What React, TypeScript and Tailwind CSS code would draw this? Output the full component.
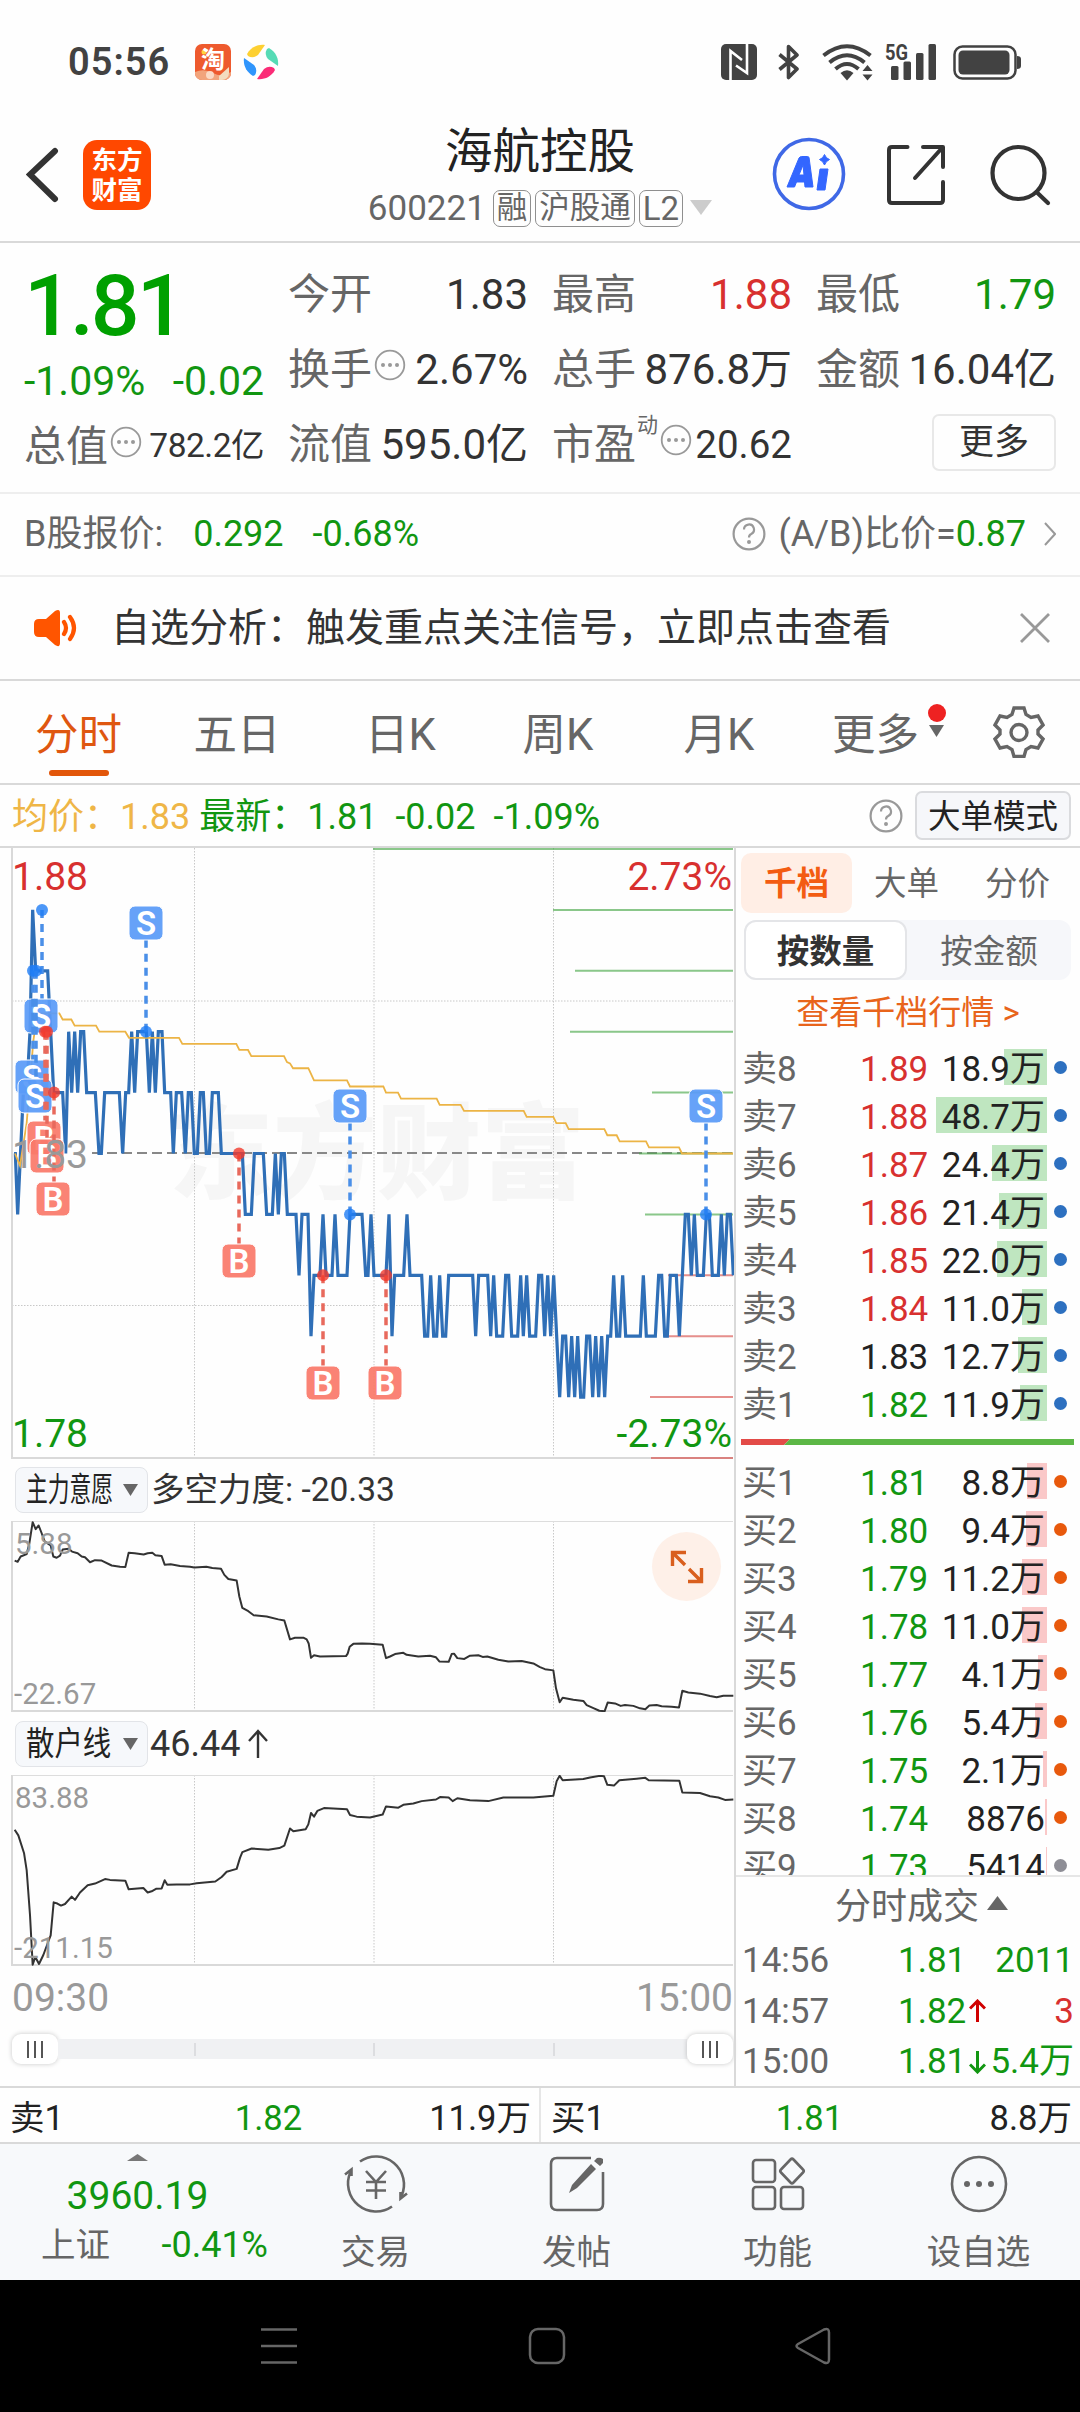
import type { ReactNode } from 'react';

interface DepthRow {
  label: string;
  price: string;
  volume: string;
  bar: number;
  tone: 'up' | 'flat' | 'down';
  dim?: boolean;
}

const SELLS: DepthRow[] = [
  { label: '卖8', price: '1.89', volume: '18.9万', bar: 43, tone: 'up' },
  { label: '卖7', price: '1.88', volume: '48.7万', bar: 111, tone: 'up' },
  { label: '卖6', price: '1.87', volume: '24.4万', bar: 55, tone: 'up' },
  { label: '卖5', price: '1.86', volume: '21.4万', bar: 48, tone: 'up' },
  { label: '卖4', price: '1.85', volume: '22.0万', bar: 50, tone: 'up' },
  { label: '卖3', price: '1.84', volume: '11.0万', bar: 25, tone: 'up' },
  { label: '卖2', price: '1.83', volume: '12.7万', bar: 29, tone: 'flat' },
  { label: '卖1', price: '1.82', volume: '11.9万', bar: 27, tone: 'down' },
];

const BUYS: DepthRow[] = [
  { label: '买1', price: '1.81', volume: '8.8万', bar: 20, tone: 'down' },
  { label: '买2', price: '1.80', volume: '9.4万', bar: 21, tone: 'down' },
  { label: '买3', price: '1.79', volume: '11.2万', bar: 25, tone: 'down' },
  { label: '买4', price: '1.78', volume: '11.0万', bar: 25, tone: 'down' },
  { label: '买5', price: '1.77', volume: '4.1万', bar: 9, tone: 'down' },
  { label: '买6', price: '1.76', volume: '5.4万', bar: 12, tone: 'down' },
  { label: '买7', price: '1.75', volume: '2.1万', bar: 4, tone: 'down' },
  { label: '买8', price: '1.74', volume: '8876', bar: 2, tone: 'down' },
  { label: '买9', price: '1.73', volume: '5414', bar: 1, tone: 'down', dim: true },
];

const TONES = {
  up: 'text-[#d8302f]',
  flat: 'text-[#222]',
  down: 'text-[#119611]',
};

// [x in thirds of a pixel, cents away from 1.83]
const PRICE: [number, number][] = [
  [42, 0], [46, 0], [53, -1], [70, 1], [80, 1], [90, 2], [98, 4], [107, 3], [143, 3], [152, 2], [161, 1], [188, 1], [197, 0],
  [206, 2], [215, 1], [224, 2], [233, 1], [242, 2], [251, 2], [260, 1], [286, 1], [297, 0], [304, 0], [314, 1], [358, 1],
  [368, 0], [377, 1], [386, 1], [395, 2], [404, 1], [413, 2], [439, 2], [448, 1], [457, 2], [466, 1], [475, 2], [486, 2],
  [494, 1], [512, 1], [520, 0], [529, 1], [545, 1], [556, 0], [565, 1], [574, 1], [583, 0], [592, 0], [601, 1], [610, 1],
  [619, 0], [628, 0], [637, 1], [655, 1], [664, 0], [727, 0], [736, -1], [754, -1], [763, 0], [790, 0], [800, -1], [817, -1],
  [826, 0], [835, -1], [844, 0], [853, 0], [862, -1], [888, -1], [897, -2], [906, -1], [924, -1], [933, -3], [942, -2],
  [960, -2], [969, -1], [978, -2], [996, -2], [1005, -1], [1014, -2], [1041, -2], [1050, -1], [1086, -1], [1097, -2],
  [1104, -2], [1113, -1], [1122, -2], [1158, -2], [1167, -1], [1176, -3], [1184, -2], [1211, -2], [1221, -1], [1230, -2],
  [1265, -2], [1274, -3], [1283, -3], [1292, -2], [1301, -3], [1310, -3], [1319, -2], [1328, -3], [1337, -3], [1346, -2],
  [1418, -2], [1427, -3], [1436, -2], [1463, -2], [1472, -3], [1481, -2], [1490, -3], [1508, -3], [1517, -2], [1526, -2],
  [1535, -3], [1553, -3], [1562, -2], [1570, -3], [1580, -2], [1589, -3], [1607, -3], [1616, -2], [1625, -2], [1634, -3],
  [1643, -2], [1652, -3], [1661, -2], [1670, -3], [1679, -4], [1688, -3], [1697, -3], [1706, -4], [1715, -3], [1724, -4],
  [1733, -3], [1742, -4], [1751, -4], [1760, -3], [1769, -3], [1778, -4], [1787, -3], [1796, -4], [1805, -3], [1814, -4],
  [1823, -3], [1832, -3], [1841, -2], [1850, -3], [1859, -3], [1868, -2], [1877, -3], [1921, -3], [1930, -2], [1939, -3],
  [1966, -3], [1976, -2], [1985, -2], [1994, -3], [2002, -3], [2011, -2], [2029, -2], [2038, -3], [2047, -2], [2056, -1],
  [2065, -1], [2074, -2], [2083, -1], [2092, -2], [2110, -2], [2119, -1], [2128, -1], [2137, -2], [2155, -2], [2164, -1],
  [2173, -2], [2182, -1], [2191, -1], [2200, -2],
];

const AVERAGE: [number, number][] = [
  [45, 0], [60, -0.2], [80, 0.5], [100, 1.85], [112, 2.3], [178, 2.3], [188, 2.2], [214, 2.2], [224, 2.1], [288, 2.1],
  [298, 2], [376, 2], [387, 1.9], [537, 1.9], [547, 1.8], [709, 1.8], [718, 1.7], [744, 1.7], [754, 1.6], [852, 1.6],
  [861, 1.5], [870, 1.48], [879, 1.4], [925, 1.4], [942, 1.2], [1041, 1.2], [1050, 1.1], [1150, 1.1], [1158, 1],
  [1194, 1], [1203, 0.9], [1310, 0.9], [1319, 0.8], [1382, 0.8], [1392, 0.7], [1571, 0.7], [1580, 0.6], [1660, 0.6],
  [1669, 0.5], [1697, 0.5], [1706, 0.4], [1813, 0.4], [1822, 0.3], [1850, 0.3], [1859, 0.2], [1938, 0.2], [1947, 0.1],
  [2037, 0.1], [2046, 0], [2199, 0],
];

// resting orders drawn at the right edge: [cents, left x]
const LADDER: [number, number][] = [
  [5, 373], [4, 553], [3, 575], [2, 570], [1, 652], [0, 639], [-1, 645], [-2, 668], [-3, 664], [-4, 650], [-5, 651],
];

const MARKERS: { kind: 'S' | 'B'; x: number; cents: number; box: number; boxX?: number }[] = [
  { kind: 'S', x: 42, cents: 4, box: 168, boxX: 41 },
  { kind: 'S', x: 33, cents: 3, box: 229, boxX: 32 },
  { kind: 'S', x: 36, cents: 3, box: 248, boxX: 35 },
  { kind: 'B', x: 45, cents: 2, box: 290, boxX: 44 },
  { kind: 'B', x: 47, cents: 2, box: 308, boxX: 47 },
  { kind: 'B', x: 54, cents: 1, box: 351, boxX: 53 },
  { kind: 'S', x: 146, cents: 2, box: 75 },
  { kind: 'B', x: 239, cents: 0, box: 413 },
  { kind: 'B', x: 323, cents: -2, box: 535 },
  { kind: 'S', x: 350, cents: -1, box: 258 },
  { kind: 'B', x: 386, cents: -2, box: 535, boxX: 385 },
  { kind: 'S', x: 706, cents: -1, box: 258 },
];

const MAIN_FORCE =
  '44,272 53,275 62,262 80,256 88,230 98,178 107,195 116,186 125,205 134,225 152,235 160,262 170,265 180,260 188,245 206,243 216,250 233,254 245,262 255,264 270,276 285,271 305,272 335,284 360,287 376,288 386,253 404,254 431,257 443,254 457,253 466,259 485,261 494,282 512,281 540,285 570,287 583,289 619,287 637,290 663,292 673,307 685,317 710,321 718,360 727,388 745,396 761,406 800,409 835,416 853,419 870,465 885,461 910,461 920,465 926,475 933,510 942,504 960,507 1038,506 1043,500 1049,483 1060,476 1086,475 1110,476 1148,478 1158,511 1170,507 1185,501 1210,498 1220,503 1255,507 1290,505 1308,509 1318,519 1346,520 1355,501 1362,500 1372,511 1393,513 1410,505 1435,504 1448,508 1462,507 1495,515 1525,519 1565,518 1600,524 1620,533 1635,538 1660,541 1668,585 1679,619 1688,608 1720,613 1750,616 1760,626 1782,634 1798,640 1814,641 1823,620 1845,622 1862,628 1875,626 1900,628 1920,634 1936,636 1948,627 1970,626 1985,629 2015,630 2037,632 2047,591 2065,595 2100,598 2130,604 2150,607 2170,603 2200,603';

const RETAIL =
  '44,931 55,945 72,988 80,1030 90,1140 98,1262 106,1243 117,1260 130,1238 145,1205 152,1190 161,1109 172,1112 183,1117 195,1113 215,1095 225,1103 240,1085 263,1067 285,1063 315,1052 330,1054 376,1056 386,1077 430,1074 443,1085 455,1082 468,1076 485,1075 494,1055 502,1066 530,1065 570,1065 590,1062 646,1058 665,1047 680,1034 710,1027 720,1000 727,986 755,977 805,980 838,976 853,970 870,928 880,935 917,930 925,918 933,890 942,899 952,885 972,878 1041,881 1050,895 1070,899 1110,901 1148,894 1158,874 1195,877 1210,870 1240,867 1265,861 1308,857 1320,851 1346,852 1358,861 1372,854 1410,859 1465,861 1510,852 1600,852 1660,848 1670,812 1679,799 1688,810 1750,807 1770,803 1800,799 1812,800 1822,821 1842,823 1858,810 1910,806 1936,804 1946,810 2038,811 2047,840 2100,841 2130,849 2155,852 2175,858 2200,857';

const priceY = (cents: number) => 305.5 - cents * 60.9;
const toPoints = (data: [number, number][]) => data.map(([x, c]) => `${x / 3},${priceY(c)}`).join(' ');

function StatusBar() {
  return (
    <div className="flex h-[104px] items-center pt-[21px] pr-[59px] pl-[68px] text-[#424242]">
      <span className="w-[127px] text-[38px] leading-none font-semibold tracking-[1px]">05:56</span>
      <svg width="36" height="36" viewBox="0 0 36 36">
        <rect width="36" height="36" rx="7" fill="#ee5a2e" />
        <path d="M0 28q9-4 18 1t18-1v1a7 7 0 0 1-7 7H7a7 7 0 0 1-7-7z" fill="#f2a47c" />
        <circle cx="15" cy="31" r="4" fill="#fbd9c4" />
        <path d="M24 32l10-9v6a7 7 0 0 1-7 7h-3z" fill="#f3dcc0" />
        <circle cx="9" cy="8" r="2.5" fill="#ffd23e" />
        <text x="18" y="24" fontSize="24" fontWeight="700" fill="#fff" textAnchor="middle">淘</text>
      </svg>
      <svg width="36" height="36" viewBox="-18 -18 36 36" className="ml-[12px]">
        <path d="M-14-8C-10-15-3-18 4-17L-3-7q-5 4-10 1z" fill="#fdd032" />
        <path d="M8-14C15-10 18-3 17 4L7-3q-4-5-1-10z" fill="#56dbb5" />
        <path d="M14 8C10 15 3 18-4 17L3 7q5-4 10-1z" fill="#fb2c77" />
        <path d="M-8 14C-15 10-18 3-17-4L-7 3q4 5 1 10z" fill="#2f95fc" />
      </svg>
      <div className="flex-1" />
      <svg width="36" height="36" viewBox="0 0 36 36">
        <rect width="36" height="36" rx="5" fill="#424242" />
        <path d="M9.500 36V7l11.500 9M26 0v29L15 21.500" fill="none" stroke="#fff" strokeWidth="2.600" />
      </svg>
      <svg width="22" height="36" viewBox="0 0 22 36" className="ml-[21px]" fill="none" stroke="#424242" strokeWidth="3.600" strokeLinejoin="round">
        <path d="M1.500 10.500L19 25l-8.500 8.500V2.500L19 11 1.500 25.500" />
      </svg>
      <svg width="51" height="37" viewBox="0 0 51 37" className="ml-[22px]">
        <g fill="none" stroke="#424242" strokeWidth="4">
          <path d="M1.500 11.500Q25 -7 48.500 11.500" />
          <path d="M7.500 18.500Q25 4 42.500 18.500" />
          <path d="M13.500 25Q25 15 36.500 25" />
        </g>
        <path d="M18.500 29q6.500-5.500 13 0L25 36.500z" fill="#424242" />
        <path d="M40.500 27l5-6 5 6zM40.500 30.500l5 6 5-6z" fill="#424242" />
      </svg>
      <svg width="54" height="38" viewBox="0 0 54 38" className="ml-[12px] overflow-visible" fill="#424242">
        <text x="0" y="16.500" fontSize="22" fontWeight="700" textLength="23" lengthAdjust="spacingAndGlyphs">5G</text>
        <rect x="6" y="23" width="7.500" height="14" rx="1.500" />
        <rect x="18.500" y="18.500" width="7.500" height="18.500" rx="1.500" />
        <rect x="31" y="10" width="7.500" height="27" rx="1.500" />
        <rect x="43.500" y="1" width="7.500" height="36" rx="1.500" />
      </svg>
      <svg width="68" height="36" viewBox="0 0 68 36" className="ml-[14px]">
        <rect x="1.500" y="2.500" width="61" height="32" rx="8" fill="none" stroke="#424242" strokeWidth="2.500" />
        <rect x="5.500" y="6.500" width="51" height="24" rx="4.500" fill="#424242" />
        <path d="M64 12q4 0 4 3v7q0 3-4 3z" fill="#424242" />
      </svg>
    </div>
  );
}

function Tag({ children }: { children: ReactNode }) {
  return (
    <span className="flex h-[37px] items-center rounded-[7px] border border-[#8f8f8f] px-[3px] leading-none">
      {children}
    </span>
  );
}

function Header() {
  return (
    <header className="flex h-[139px] border-b-2 border-[#d9d9d9]">
      <div className="flex w-[340px] items-start pt-[36px] pl-[26px]">
        <svg width="36" height="66" viewBox="0 0 36 66" fill="none" stroke="#333" strokeWidth="6" strokeLinecap="round">
          <path d="M29 11L4 34.500 29 59" />
        </svg>
        <div className="ml-[21px] flex h-[70px] w-[68px] flex-col items-center justify-center rounded-[14px] bg-[#ff4800] text-[25.500px] leading-[30px] font-bold text-white">
          <span>东方</span>
          <span>财富</span>
        </div>
      </div>
      <div className="flex w-[400px] flex-col items-center pt-[22px]">
        <h1 className="text-[47.500px] leading-[52px] text-[#222]">海航控股</h1>
        <div className="mt-[12px] flex items-center gap-[4px] text-[30.500px] text-[#666]">
          <span className="mr-[3px] text-[35px] leading-none">600221</span>
          <Tag>融</Tag>
          <Tag>沪股通</Tag>
          <Tag>
            <span className="text-[33px]">L2</span>
          </Tag>
          <svg width="22" height="16" viewBox="0 0 22 16" className="ml-[3px]" fill="#ccc">
            <path d="M0 0h22L11 15z" />
          </svg>
        </div>
      </div>
      <div className="flex flex-1 items-start pt-[33px] pl-[32px]">
        <svg width="74" height="74" viewBox="-37 -37 74 74">
          <circle r="34.500" fill="none" stroke="#3f68e6" strokeWidth="3.600" />
          <path
            d="M-22 13L-10-16q1-1.500 2.500-1.500h6q1.500 0 1.600 1.500L4 13h-8l-.5-5h-8l-2 5zM-10 1h5l-1-10zM11-5h8L16 16H8z"
            fill="#3366ff"
            fillRule="evenodd"
            strokeLinejoin="round"
            stroke="#3366ff"
          />
          <path d="M15.500-19.500q1.500 4 5 5-3.500 1.500-5 5.500-1.500-4-5-5.500 3.500-1 5-5z" fill="#3366ff" stroke="#3366ff" />
        </svg>
        <svg width="60" height="62" viewBox="0 0 60 62" className="mt-[7px] ml-[41px]" fill="none" stroke="#333" strokeWidth="4" strokeLinecap="round" strokeLinejoin="round">
          <path d="M20.500 3H5q-3 0-3 3v50q0 3 3 3h48q3 0 3-3V38M36 3h20v20M55 4L28 34" />
        </svg>
        <svg width="64" height="64" viewBox="0 0 64 64" className="mt-[7px] ml-[42px]" fill="none" stroke="#333" strokeWidth="4.200" strokeLinecap="round">
          <circle cx="29.500" cy="29" r="26" />
          <path d="M47.500 48L59 59" />
        </svg>
      </div>
    </header>
  );
}

function Dots() {
  return (
    <svg width="32" height="32" viewBox="-16 -16 32 32" fill="#999" className="mb-[10px] ml-[2px] shrink-0">
      <circle r="14.300" fill="none" stroke="#999" strokeWidth="1.800" />
      <circle cx="-7" r="2" />
      <circle r="2" />
      <circle cx="7" r="2" />
    </svg>
  );
}

function Help() {
  return (
    <svg width="34" height="34" viewBox="-17 -17 34 34" fill="none" stroke="#999" strokeWidth="2.200">
      <circle r="15.400" />
      <path d="M-5-4.500a5 5 0 1 1 7.200 4.500Q0 1 0 3.500" />
      <circle cy="8" r=".9" fill="#999" />
    </svg>
  );
}

function Stat({ label, value, className = 'text-[#333]', dots = false }: { label: string; value: string; className?: string; dots?: boolean }) {
  return (
    <div className="flex h-[75px] items-center">
      <span className="text-[#666]">{label}</span>
      {dots && <Dots />}
      <span className={`ml-auto ${className}`}>{value}</span>
    </div>
  );
}

function Quote() {
  return (
    <section className="grid h-[251px] grid-cols-4 gap-x-6 border-b-2 border-[#eee] px-6 pt-[15px] text-[42px] leading-none whitespace-nowrap">
      <div>
        <div className="flex h-[88px] items-center pt-[8px] text-[86px] font-medium tracking-[-3px] text-[#00a000]">1.81</div>
        <div className="flex h-[66px] items-center justify-between pt-[5px] text-[41px] text-[#119611]">
          <span>-1.09%</span>
          <span>-0.02</span>
        </div>
        <div className="flex h-[71px] items-center">
          <span className="text-[#666]">总值</span>
          <Dots />
          <span className="ml-auto pb-[4px] text-[33.500px] tracking-[-0.500px] text-[#333]">782.2亿</span>
        </div>
      </div>
      <div>
        <Stat label="今开" value="1.83" />
        <Stat label="换手" value="2.67%" dots />
        <Stat label="流值" value="595.0亿" />
      </div>
      <div>
        <Stat label="最高" value="1.88" className={TONES.up} />
        <Stat label="总手" value="876.8万" />
        <div className="flex h-[75px] items-center text-[#666]">
          <span>市盈</span>
          <span className="mb-[40px] ml-[1px] text-[21px]">动</span>
          <Dots />
          <span className="ml-auto text-[38.500px] text-[#333]">20.62</span>
        </div>
      </div>
      <div>
        <Stat label="最低" value="1.79" className={TONES.down} />
        <Stat label="金额" value="16.04亿" />
        <div className="flex h-[75px] items-center justify-end">
          <button className="mt-[-6px] h-[57px] w-[124px] rounded-[7px] border-2 border-[#e8e8e8] text-[35px] leading-none text-[#333]">更多</button>
        </div>
      </div>
    </section>
  );
}

function BShareRow() {
  return (
    <div className="flex h-[83px] items-center border-b-2 border-[#eee] px-6 pb-[1px] text-[36px] leading-none text-[#666]">
      <span>B股报价:</span>
      <span className="ml-[30px] text-[#119611]">0.292</span>
      <span className="ml-[29px] text-[#119611]">-0.68%</span>
      <span className="flex-1" />
      <Help />
      <span className="ml-[12px]">(A/B)比价=</span>
      <span className="text-[#119611]">0.87</span>
      <svg width="12" height="26" viewBox="0 0 12 26" className="ml-[18px]" fill="none" stroke="#999" strokeWidth="2">
        <path d="M1 2l10 11L1 24" />
      </svg>
    </div>
  );
}

function Notice() {
  return (
    <div className="flex h-[105px] items-center border-b-2 border-[#d9d9d9] pl-[33px] text-[#333]">
      <svg width="46" height="38" viewBox="0 0 46 38" fill="#ff5500">
        <path d="M6 10h7L22 2q5-3 5 2v30q0 5-5 2l-9-8H6q-5 0-5-5v-8q0-5 5-5z" />
        <path d="M31 13q4 6 0 12M37 8q8 11 0 22" fill="none" stroke="#ff5500" strokeWidth="4.200" strokeLinecap="round" />
      </svg>
      <span className="ml-[32px] pt-[2px] text-[39px] leading-none whitespace-nowrap">自选分析：触发重点关注信号，立即点击查看</span>
      <svg width="30" height="30" viewBox="0 0 30 30" className="ml-[129px]" stroke="#999" strokeWidth="2.800">
        <path d="M1 1l28 28M29 1L1 29" />
      </svg>
    </div>
  );
}

function PeriodTabs() {
  return (
    <nav className="flex h-[104px] items-center border-b-2 border-[#d9d9d9] text-[43.500px] leading-none text-[#666]">
      <span className="relative flex h-full w-[157px] items-center justify-center pt-[6px] text-[#df5710]">
        分时
        <span className="absolute bottom-[7px] left-[49px] h-[6px] w-[60px] rounded-full bg-[#e2560a]" />
      </span>
      <span className="w-[160px] pt-[6px] text-center">五日</span>
      <span className="w-[167px] pt-[6px] text-center">日K</span>
      <span className="w-[148px] pt-[6px] text-center">周K</span>
      <span className="w-[174px] pt-[6px] text-center">月K</span>
      <span className="relative ml-[26px] pt-[6px]">
        更多
        <span className="absolute top-[-4px] left-[96px] h-[18px] w-[18px] rounded-full bg-[#ee2222]" />
        <svg width="15" height="12" viewBox="0 0 15 12" className="absolute top-[17px] left-[97px]" fill="#666">
          <path d="M0 0h15L7.500 12z" />
        </svg>
      </span>
      <svg width="52" height="52" viewBox="-26 -26 52 52" className="ml-[74px]" fill="none" stroke="#666" strokeWidth="3.400">
        <path d="M-5-24h10l2 6.500 5 3 7-1.500 5 9-5 5v4l5 5-5 9-7-1.500-5 3-2 7h-10l-2-7-5-3-7 1.500-5-9 5-5v-4l-5-5 5-9 7 1.500 5-3z" />
        <circle r="8" cy=".5" />
      </svg>
    </nav>
  );
}

function PriceSummary() {
  return (
    <div className="flex h-[63px] items-center border-b-2 border-[#d9d9d9] pr-[9px] pl-3 text-[36px] leading-none whitespace-nowrap text-[#119611]">
      <span className="pt-[2px] text-[#efb647]">均价：1.83</span>
      <span className="ml-[9px] pt-[2px]">最新：1.81</span>
      <span className="ml-[18px] pt-[2px]">-0.02</span>
      <span className="ml-[18px] pt-[2px]">-1.09%</span>
      <span className="flex-1" />
      <Help />
      <button className="ml-[12px] h-[49px] w-[156px] rounded-[7px] border-2 border-[#dadbde] bg-[#f6f7fa] pt-[2px] text-[32.500px] leading-none text-[#222]">
        大单模式
      </button>
    </div>
  );
}

function GridLines({ height }: { height: number }) {
  return (
    <g stroke="#c8c8c8" strokeWidth="1" strokeDasharray="1.500 1.500">
      <path d={`M194.500 0V${height}M374 0V${height}M553.500 0V${height}`} />
    </g>
  );
}

function PriceChart() {
  return (
    <svg width="734" height="611" viewBox="0 0 734 611" className="mb-[-1px] block">
      <text x="169" y="343" fontSize="104" fontWeight="900" fill="#f6f6f6">东方财富</text>
      <GridLines height={610} />
      <path d="M12 153H733M12 457.500H733" stroke="#c8c8c8" strokeDasharray="1.500 1.500" />
      <path d="M12 0V610H733" fill="none" stroke="#d9d9d9" strokeWidth="2" />
      <path d="M92 305H733" stroke="#888" strokeWidth="2" strokeDasharray="10 5" />
      {LADDER.map(([cents, x]) => (
        <path
          key={cents}
          d={`M${x} ${Math.max(priceY(cents), 1)}H733`}
          stroke={cents > -2 ? '#4ba94b' : '#d9534f'}
          strokeOpacity=".65"
          strokeWidth="2"
        />
      ))}
      <polyline points={toPoints(PRICE)} fill="none" stroke="#2f6fb7" strokeWidth="3.200" />
      <polyline points={toPoints(AVERAGE)} fill="none" stroke="#ecb445" strokeWidth="1.800" />
      {MARKERS.map((m, i) => {
        const color = m.kind === 'S' ? '#5a9bf8' : '#fa7a6a';
        const bx = m.boxX ?? m.x;
        const y = priceY(m.cents);
        const edge = m.box > y ? m.box - 17 : m.box + 17;
        return (
          <g key={i}>
            <path d={`M${m.x} ${y}V${edge}`} stroke={m.kind === 'S' ? '#4a8fe8' : '#e8695c'} strokeWidth="3.500" strokeDasharray="8 6" />
            <circle cx={m.x} cy={y} r="6" fill={m.kind === 'S' ? '#1f7df5' : '#f2392c'} fillOpacity=".8" />
            <rect x={bx - 17} y={m.box - 17} width="34" height="34" rx="6" fill={color} fillOpacity=".93" stroke="#fff" />
            <text x={bx} y={m.box + 11.500} fontSize="33" fontWeight="600" fill="#fff" textAnchor="middle">{m.kind}</text>
          </g>
        );
      })}
      <g fontSize="39">
        <text x="12" y="42" fill="#d8302f">1.88</text>
        <text x="12" y="319.500" fill="#999">1.83</text>
        <text x="12" y="599" fill="#119611">1.78</text>
        <text x="732" y="42" fill="#d8302f" textAnchor="end">2.73%</text>
        <text x="732" y="599" fill="#119611" textAnchor="end">-2.73%</text>
      </g>
    </svg>
  );
}

function TrendChart({ points, top, high, low, children }: { points: string; top: number; high: string; low: string; children?: ReactNode }) {
  return (
    <div className="relative h-[191px]">
      <svg width="734" height="191" viewBox="0 0 734 191" className="block">
        <GridLines height={190} />
        <path d="M12 .5H733" stroke="#ddd" />
        <path d="M12 0V190H733" fill="none" stroke="#d9d9d9" strokeWidth="2" />
        <svg width="735" height="191" viewBox={`0 ${top} 2205 468`} preserveAspectRatio="none">
          <polyline points={points} fill="none" stroke="#333" strokeWidth="2" strokeLinejoin="round" vectorEffect="non-scaling-stroke" />
        </svg>
        <g fontSize="29.500" fill="#999">
          <text x="15" y="33">{high}</text>
          <text x="14" y="182.500">{low}</text>
        </g>
      </svg>
      {children}
    </div>
  );
}

function IndicatorBar({ name, nameClass, children }: { name: string; nameClass: string; children: ReactNode }) {
  return (
    <div className="flex h-[63px] items-center pl-[15px] text-[#333]">
      <button className="flex h-[46px] w-[133px] items-center rounded-[8px] border border-[#e2e4e8] bg-[#f6f8fb] pl-[10px] text-left leading-none whitespace-nowrap text-[#222]">
        <span className="w-[97px]">
          <span className={nameClass}>{name}</span>
        </span>
        <svg width="15" height="12" viewBox="0 0 15 12" fill="#666">
          <path d="M0 0h15L7.500 12z" />
        </svg>
      </button>
      {children}
    </div>
  );
}

function RangeHandle() {
  return (
    <span className="flex h-[30px] w-[46px] items-center justify-center gap-[5px] rounded-[9px] bg-white shadow-[0_0_5px_rgba(0,0,0,0.22)]">
      <i className="h-[17px] w-[2px] bg-[#555]" />
      <i className="h-[17px] w-[2px] bg-[#555]" />
      <i className="h-[17px] w-[2px] bg-[#555]" />
    </span>
  );
}

function RangeSlider() {
  return (
    <div className="mt-[16px] ml-3 flex h-[30px] w-[721px] items-center justify-between">
      <RangeHandle />
      <div className="flex h-[20px] flex-1 items-center bg-[#f0f1f3]">
        <i className="ml-[136px] h-[13px] w-[2px] bg-[#dcdde0]" />
        <i className="ml-[177px] h-[13px] w-[2px] bg-[#dcdde0]" />
        <i className="ml-[178px] h-[13px] w-[2px] bg-[#dcdde0]" />
      </div>
      <RangeHandle />
    </div>
  );
}

function Charts() {
  return (
    <div className="w-[734px] shrink-0">
      <PriceChart />
      <IndicatorBar name="主力意愿" nameClass="inline-block origin-left scale-x-[0.66] text-[33px]">
        <span className="ml-[3px] text-[33.500px] leading-none">多空力度: -20.33</span>
      </IndicatorBar>
      <TrendChart points={MAIN_FORCE} top={175} high="5.88" low="-22.67">
        <span className="absolute top-[11px] left-[652px] flex h-[69px] w-[69px] items-center justify-center rounded-full bg-[#fef0e8]">
          <svg width="34" height="34" viewBox="0 0 34 34" fill="none" stroke="#d95f1e" strokeWidth="3.400">
            <path d="M2.500 16V2.500H16M3 3l12 12M31.500 18v13.500H18M31 31L19 19" />
          </svg>
        </span>
      </TrendChart>
      <IndicatorBar name="散户线" nameClass="inline-block origin-left scale-x-[0.86] text-[33px]">
        <span className="ml-[2px] text-[36px] leading-none">46.44</span>
        <svg width="20" height="30" viewBox="0 0 20 30" className="ml-[8px]" fill="none" stroke="#333" strokeWidth="2.400">
          <path d="M10 29V2M1 12l9-10 9 10" />
        </svg>
      </IndicatorBar>
      <TrendChart points={RETAIL} top={797} high="83.88" low="-211.15" />
      <div className="flex h-[52px] items-end justify-between pr-[1px] pl-3 text-[39px] leading-none text-[#999]">
        <span>09:30</span>
        <span>15:00</span>
      </div>
      <RangeSlider />
    </div>
  );
}

function DepthLine({ row, side }: { row: DepthRow; side: 'sell' | 'buy' }) {
  const dot = row.dim ? 'bg-[#8e8e96]' : side === 'sell' ? 'bg-[#2d70c0]' : 'bg-[#e8590c]';
  return (
    <div className="relative flex h-[48px] shrink-0 items-center pl-[6px] text-[35px] leading-none">
      <span
        className={`absolute top-[6px] right-[33px] h-[36px] ${side === 'sell' ? 'bg-[#bfe6c0]' : 'bg-[#fac8c8]'}`}
        style={{ width: row.bar }}
      />
      <span className="relative w-[118px] pt-[5px] text-[#666]">{row.label}</span>
      <span className={`relative pt-[5px] ${TONES[row.tone]}`}>{row.price}</span>
      <span className="relative ml-auto pt-[5px] text-[#222]">{row.volume}</span>
      <span className={`mr-[13px] ml-[9px] h-[13px] w-[13px] rounded-full ${dot}`} />
    </div>
  );
}

function TradeLine({ time, price, volume, arrow, up }: { time: string; price: string; volume: string; arrow?: 'up' | 'down'; up?: boolean }) {
  return (
    <div className="flex h-[50.500px] shrink-0 items-center pr-[6px] pl-[6px] text-[35px] leading-none text-[#119611]">
      <span className="w-[156px] text-[#666]">{time}</span>
      <span>{price}</span>
      {arrow && (
        <svg width="17" height="24" viewBox="0 0 17 24" className={`ml-[3px] ${arrow === 'down' ? 'rotate-180' : ''}`} fill="none" stroke={arrow === 'up' ? '#d00000' : '#119611'} strokeWidth="3">
          <path d="M8.500 23V2M1 9.500L8.500 2 16 9.500" />
        </svg>
      )}
      <span className={`ml-auto ${up ? 'text-[#d8302f]' : ''}`}>{volume}</span>
    </div>
  );
}

function OrderBook() {
  return (
    <aside className="flex w-[346px] flex-col border-l-2 border-[#d9d9d9]">
      <div className="mt-[5px] flex h-[60px] shrink-0 items-center pl-[5px] text-[32.500px] leading-none text-[#666]">
        <span className="flex h-full w-[111px] items-center justify-center rounded-[10px] bg-[#ffeee5] pt-[2px] font-bold text-[#f35c12]">千档</span>
        <span className="ml-[22px] pt-[2px]">大单</span>
        <span className="ml-[46px] pt-[2px]">分价</span>
      </div>
      <div className="mt-[7px] mr-[9px] ml-[8px] flex h-[60px] shrink-0 rounded-[12px] bg-[#f6f7fa] text-[32.500px] leading-none text-[#666]">
        <span className="flex w-[163px] items-center justify-center rounded-[12px] border-2 border-[#e4e5e8] bg-white pt-[3px] font-bold text-[#333]">按数量</span>
        <span className="flex flex-1 items-center justify-center pt-[3px]">按金额</span>
      </div>
      <div className="flex h-[63px] shrink-0 items-center justify-center pt-[1px] text-[33px] leading-none text-[#e8641b]">查看千档行情 &gt;</div>
      {SELLS.map((row) => (
        <DepthLine key={row.label} row={row} side="sell" />
      ))}
      <svg width="333" height="6" viewBox="0 0 333 6" className="mt-[12px] mb-[12px] ml-[5px] shrink-0">
        <path d="M0 0H49L43 6H0z" fill="#e34b48" />
        <path d="M49 0H333V6H43z" fill="#5cb746" />
      </svg>
      <div className="h-[420px] shrink-0 overflow-hidden border-b-2 border-[#e6e6e6]">
        {BUYS.map((row) => (
          <DepthLine key={row.label} row={row} side="buy" />
        ))}
      </div>
      <div className="flex h-[58px] shrink-0 items-center justify-center pt-[1px] pl-[27px] text-[36px] leading-none text-[#666]">
        分时成交
        <svg width="21" height="14" viewBox="0 0 21 14" className="mb-[8px] ml-[8px]" fill="#666">
          <path d="M0 14h21L10.500 0z" />
        </svg>
      </div>
      <TradeLine time="14:56" price="1.81" volume="2011" />
      <TradeLine time="14:57" price="1.82" volume="3" arrow="up" up />
      <TradeLine time="15:00" price="1.81" volume="5.4万" arrow="down" />
    </aside>
  );
}

function BestQuote({ label, price, volume }: { label: string; price: string; volume: string }) {
  return (
    <div className="flex flex-1 items-center justify-between pt-[6px] pr-[8px] pl-[10px]">
      <span className="w-[106px]">{label}</span>
      <span className="text-[#119611]">{price}</span>
      <span className="w-[110px] text-right">{volume}</span>
    </div>
  );
}

function NavItem({ label, children }: { label: string; children: ReactNode }) {
  return (
    <div className="flex w-[201px] flex-col items-center pt-[8px] text-[#666]">
      <svg width="64" height="64" viewBox="-32 -32 64 64" fill="none" stroke="#666" strokeWidth="2.600">
        {children}
      </svg>
      <span className="mt-[19px] text-[34.500px] leading-none">{label}</span>
    </div>
  );
}

function BottomNav() {
  return (
    <nav className="flex h-[136px] bg-[#f7f9fb]">
      <div className="flex w-[275px] flex-col items-center leading-none">
        <svg width="21" height="7" viewBox="0 0 21 7" className="mt-[10px]" fill="#777">
          <path d="M0 7h21L10.500 0z" />
        </svg>
        <span className="mt-[16px] text-[39px] text-[#119611]">3960.19</span>
        <div className="mt-[11px] flex w-full items-center justify-between pr-[7px] pl-[41px] text-[34.500px] text-[#666]">
          上证
          <span className="text-[36px] text-[#119611]">-0.41%</span>
        </div>
      </div>
      <NavItem label="交易">
        <path d="M-16-22.500A28 28 0 0 1 25.500 12M16 22.500A28 28 0 0 1-25.500-12M31 9.500L24.500 14.500V8M-31-9.500L-24.500-14.500V-8" />
        <path d="M-10-13L0-2 10-13M-10-2H10M-10 6.500H10M0-2V15" />
      </NavItem>
      <NavItem label="发帖">
        <path d="M14-26H-20q-6 0-6 6V20q0 6 6 6H20q6 0 6-6V-12" />
        <path d="M-8 9l3-8L14-20l5 5L0 4zM17-23l3-3q3-1 6 1v4l-3 3z" fill="#666" stroke="none" />
      </NavItem>
      <NavItem label="功能">
        <rect x="-25" y="-24" width="22" height="22" rx="3" />
        <rect x="-25" y="3" width="22" height="22" rx="3" />
        <rect x="3" y="3" width="22" height="22" rx="3" />
        <path d="M12.500-24.500q1.500-1.500 3 0L25-14.500q1.500 1.500 0 3L15.500-1.500q-1.500 1.500-3 0L3-11.500q-1.500-1.500 0-3z" />
      </NavItem>
      <NavItem label="设自选">
        <circle r="27" />
        <g fill="#666" stroke="none">
          <circle cx="-12" r="3" />
          <circle r="3" />
          <circle cx="12" r="3" />
        </g>
      </NavItem>
    </nav>
  );
}

function SystemNav() {
  return (
    <div className="flex h-[132px] items-center bg-black pl-[260px]">
      <svg width="38" height="38" viewBox="0 0 38 38" stroke="#666" strokeWidth="2.500">
        <path d="M1 2.500h36M1 19h36M1 35.500h36" />
      </svg>
      <svg width="38" height="38" viewBox="0 0 38 38" className="ml-[230px]" fill="none" stroke="#666" strokeWidth="2.500">
        <rect x="2" y="2" width="34" height="34" rx="8" />
      </svg>
      <svg width="36" height="38" viewBox="0 0 36 38" className="ml-[229px]" fill="none" stroke="#666" strokeWidth="2.500" strokeLinejoin="round">
        <path d="M3 17L29 2.500q5-2 5 3V32.500q0 5-5 3L3 21q-3-2 0-4z" />
      </svg>
    </div>
  );
}

export default function App() {
  return (
    <div className="flex h-[2412px] w-[1080px] flex-col overflow-hidden bg-[#fefefe] font-['Roboto','Noto_Sans_CJK_SC',sans-serif]">
      <StatusBar />
      <Header />
      <Quote />
      <BShareRow />
      <Notice />
      <PeriodTabs />
      <PriceSummary />
      <main className="flex h-[1238px] shrink-0">
        <Charts />
        <OrderBook />
      </main>
      <div className="flex h-[58px] divide-x-2 divide-[#e6e6e6] border-y-2 border-[#d9d9d9] text-[34.500px] leading-none text-[#222]">
        <BestQuote label="卖1" price="1.82" volume="11.9万" />
        <BestQuote label="买1" price="1.81" volume="8.8万" />
      </div>
      <BottomNav />
      <SystemNav />
    </div>
  );
}
